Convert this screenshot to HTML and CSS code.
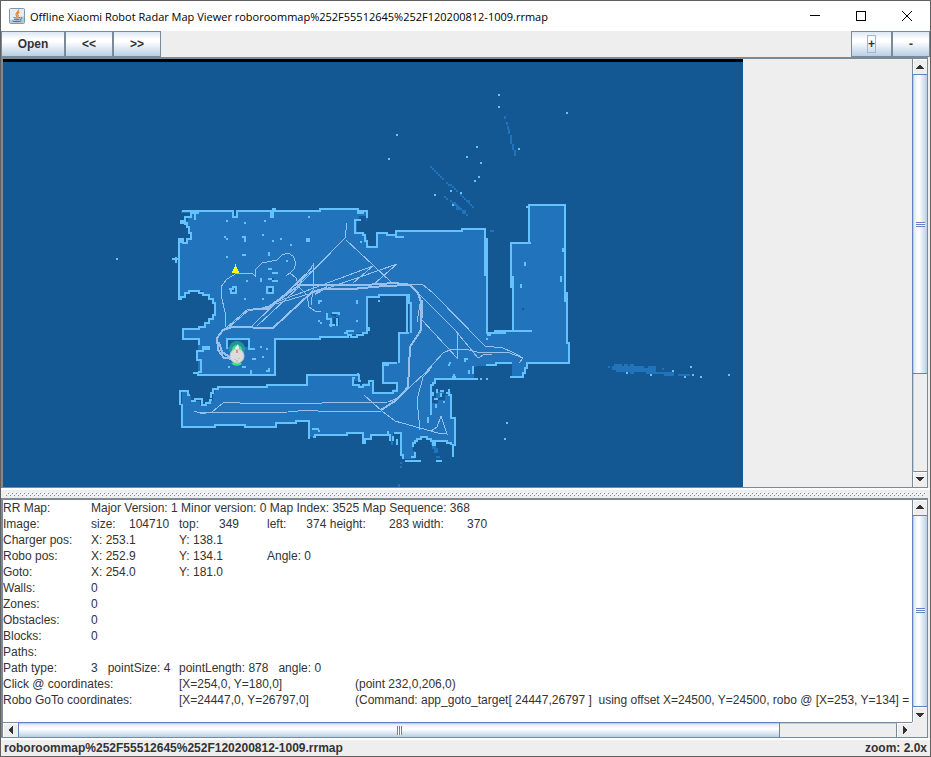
FILE: index.html
```html
<!DOCTYPE html>
<html lang="en">
<head>
    <meta charset="utf-8">
    <title>Offline Xiaomi Robot Radar Map Viewer</title>
    <link rel="stylesheet" href="styles.css">
</head>
<body>
    <div class="window">
        <header class="titlebar">
            <svg class="app-icon" viewBox="0 0 16 16">
                <rect x="0.5" y="0.5" width="15" height="15" rx="1" fill="#e6edf2" stroke="#8298aa"/>
                <path d="M1 15h14v-7c-4 3-9 4-14 4z" fill="#b9cad8"/>
                <path d="M9.5 1.5c1 2-3 3-2.500 5 .2 1 1 1.500 .7 2.500M10.500 4c-2 1-2.500 2-1.500 3 .5.600.3 1.200-.3 1.800" fill="none" stroke="#ee7d22" stroke-width="1.200"/>
                <path d="M4.500 9.500c2 .8 4.500.7 6.500 0M5 11.300c2 .6 4 .5 5.500 0M3.500 13c3 .9 6 .8 9-.1M11.500 9.300c2.200-.3 1.700 1.700-.4 2.200" fill="none" stroke="#46708f"/>
            </svg>
            <h1>Offline Xiaomi Robot Radar Map Viewer roboroommap%252F55512645%252F120200812-1009.rrmap</h1>
            <div class="window-buttons">
                <button aria-label="Minimize"><svg viewBox="0 0 10 10"><path d="M0 4.500h10"/></svg></button>
                <button aria-label="Maximize"><svg viewBox="0 0 10 10"><path d="M.5.5h9v9h-9z"/></svg></button>
                <button aria-label="Close"><svg class="close-icon" viewBox="0 0 10 10"><path d="M0 0l10 10M10 0L0 10"/></svg></button>
            </div>
        </header>

        <nav class="toolbar">
            <button class="open">Open</button>
            <button>&lt;&lt;</button>
            <button>&gt;&gt;</button>
            <span class="spacer"></span>
            <button class="zoom-in"><span class="focus">+</span></button>
            <button class="zoom-out">-</button>
        </nav>

        <main class="split">
            <section class="pane map-pane">
                <div class="map-view">
                    <svg class="map" viewBox="3 59 740 428" shape-rendering="crispEdges">
                        <rect class="outside" x="3" y="59" width="740" height="428"/>
                        <rect x="3" y="59" width="740" height="3"/>

                        <!-- rooms -->
                        <path class="room" d="M181 211H233V217H237V211H271V217H273V211H320V209H358V211H367V221H357V233H365V237H367V245H369V247H377V233H387V235H396V231H462V229H485V238H487V333H496V331H513V288H511V243H529V205H565V292H567V342H569V363H527V367H525V373H523V377H512V363H496V365H486V367H474V379H435V383H431V392H451V418H455V445H451V443H447V441H435V445H431V439H427V437H421V439H417V441H415V443H413V451H415V459H403V457H401V433H393V445H391V435H371V439H365V443H363V433H347V435H315V437H309V421H296V423H276V427H245V425H215V427H182V391H188V395H191V401H200V405H208V401H213V393H215V389H218V387H267V385H307V375H358V381H353V385H363V383H373V393H393V389H397V383H383V363H399V333H409V295H379V297H367V333H357V335H348V337H320V339H275V375H198V339H183V329H199V327H205V323H209V319H213V315H215V303H213V299H209V295H203V291H189V293H185V297H181V299H179V239H183V243H187V239H191V233H189V227H187V223H181V221H185V217H191V213H181Z"/>
                        <path class="room wall-free" d="M443 167M505 116v3M507 122v3M508 126v3M509 129v5M511 135v3M513 144v6M515 150v6M511 136v8M430 167h2M432 169h2M434 171h2M436 173h2M438 175h2M440 177h2M442 179h2M446 183h2M448 185h4M452 187h2M454 189h2M456 191h2M460 195h2M462 197h2M464 199h2M466 201h4M468 203h2M470 205h2M472 207h2M444 197h2M446 199h2M450 201h2M452 203h4M454 205h4M456 207h4M456 209h6M462 211h4M462 213h4M466 215h2"/>
                        <path class="streak" d="M614 364h8v2h2v-2h4v2h2v-2h4v2h10v2h4v-2h8v6h18v4h-10v-2h-18v-2h-12v2h-4v-2h-14v-2h-4v-4h2zM608 366h2v2h-2zM662 368h2v2h-2zM678 374h12v2h-12zM400 462h2v2h-2zM400 466h2v2h-2zM398 484h2v3h-2zM490 230h4v2h-4zM432 444h4v4h2v5h-4v-4h-2zM436 456h4v2h-4z"/>

                        <!-- dark spots inside the rooms -->
                        <path class="outside" d="M228 340h20v7h-20zM181 215h7v6h-5v5h6v12h-7v-9h-2zM358 222h4v6h4v-12h-7zM330 314h6v4h-3v7h6v-8h-4zM271 278h3v2h-3zM522 308h2v2h-2zM232 288h3v3h-3zM269 288h4v5h-4zM432 392h4v6h4v-4h4v-3h4v4h-3v5h-7v3h-6zM474 374h12v-8h-10z"/>

                        <!-- walls -->
                        <path class="wall" d="M182 211H233V217H237V211H271V217H273V209H275V211H320V209H358V211H367V218M358 211V213H363V211M361 220H355V233H363V235H365V241H367V247H377V233H387V235H396V237H404M394 235H396V231H462V229H485V276M487 238V333H506M494 331H532M487 335H491M486 339H488M513 330V276M511 288V243H531M529 243V205H565V302M528 207H526M567 292V344M569 342V363H527V369M525 367V373H523V377H510M512 363H496V365H486M473 366V374M488 379H486M482 379H480M478 379H435V383H433V385H431V415M428 417V423M433 392V396M441 393V397M449 389V395H451V418H455V445H453V457M451 445V443H447V441H435V445H433V441H431V439H427V437H421V439H417V441H415V443H413V447M415 452V457M411 457H416M405 461H421M436 461H442M403 459V455H401V433H394M393 436V441M397 439V445M390 441V435H371V439H365V443H363V433H347V435H315V437H313M309 439V421H296V423H276V427H245V425H215V427H182V404M180 405V391H188V395H190M191 401H195V399H202V405H206V403H210V400H212M211 398V393H213V389H218V387H267V385H307V375H358V373M359 374V381H361M355 378H353V385H359V387H363V385H369V381H373V393H393V391H397V383H383V363H397M385 364V365H389M399 363V333H409M411 333V303H409V295H379V297H367V333H363V335H357V337H351V335H348V337H320V339H275V375H198V373H193M198 372H201V360H197V351H203V347H209V349H205V350M199 345V339H183V329H191M189 329H199V327H205V323H209V319H213V315H215V303H213V299H209V295H203V293H199V291H189V293H185V297H181V299H179V239H183V243H187V239H191V233H189V227H187V223H181V221H185V217H191V213H199M172 259H179M176 263V257M185 216V225M181 238V243M195 214V220M407 295V333M227 349V339H249V349H255M233 347H241"/>

                        <!-- single pixels -->
                        <path class="wall" d="M498 95h2M498 107h2M566 113h2M396 135h2M388 159h2M476 147h2M466 157h2M480 163h2M518 149h2M478 177h2M474 181h2M450 191h2M460 193h2M434 195h2M452 205h2M116 259h2M626 373h2M650 375h2M672 371h2M690 367h2M692 375h2M684 377h2M700 377h2M728 375h2M504 439h2M506 423h2"/>
                        <path class="wall" d="M226 221h2M244 223h2M264 221h2M308 217h2M224 237h2M226 239h2M242 237h4M245 236v6M262 235h2M272 241h2M280 239h2M306 239h4M306 241h4M290 245h2M226 257h2M242 255h4M269 252v4M286 261h2M268 269h4M272 273h6M261 278v4M246 281h2M268 279h4M272 281h6M244 299h2M262 299h2M318 301h4M319 300v4M357 300v4M318 321h2M320 323h2M356 321h2M229 289h4V287h3V293h-5V289M267 287h6V293h-6V286M332 313h7V315M327 313v6h4v8M329 325h6M337 318v8M344 333h4M346 331h8M525 262v4M521 284v4M561 276v6M563 248v4M378 301h2M369 327v4M464 359h4M465 360v2M448 365h2M449 363h2M452 377h4M453 375h2M469 370v4M260 347h2M266 349h2M262 357h2M252 359h4M242 367h4M228 367h2M251 370v4M266 371h4M269 368v4M361 241v2M436 404v4M440 391h4M446 393h3M437 389v4M434 399h4M443 402h2M388 431v4M312 429h7M319 430v2"/>

                        <!-- robot track -->
                        <g class="track">
                            <path d="M225 327V312L221 295V287L227 279L237 273H252L255 276V270L262 263L277 260L282 255L288 253L293 256L296 263L294 269L290 273L286 276M290 273L296 278L299 287L307 295L309 307L315 311H321"/>
                            <path d="M226 328L248 309H268L297 287L313 265V290L311 305M229 327L249 310M252 326L287 292L312 268M257 326L300 286M313 270L272 305L259 309"/>
                            <path d="M347 223L345 238L300 284M346 240L373 265L392 283M397 264L360 277L322 290L272 305M373 266L322 285L279 301M397 264L373 285M373 266L353 283"/>
                            <path d="M410 284H422L433 293L485 346L503 348L514 353L523 358L519 363M417 292L455 330L478 358L485 354L492 355M422 320L457 358V334M421 298L417 322M422 300V318"/>
                            <path d="M200 414L212 412L223 403L228 402L240 403H308L317 404L322 403L388 402L398 398L425 373L443 353L452 349H465L477 352H507L523 358M364 395L382 411L395 421L420 428L438 433L447 434L441 416L437 427L431 431M420 430L417 400L423 377L432 367M381 411H318L308 410L288 412L200 413L194 411"/>
                        </g>
                        <path class="track trunk" d="M233 359L224 358L218 350L217 338L223 330L232 327L273 328L312 292L323 289H352L385 286L410 285L418 293L421 302V330L410 347L408 387L403 393L395 401L381 410"/>
                        <path class="track trunk" d="M297 285H365L395 283L412 285M249 310L267 308L298 286M231 358L222 352L219 342M315 294L327 287"/>

                        <!-- goto marker, charger and robot -->
                        <path d="M235 264h1v3h1v2h1v2h1v2h-7v-2h1v-2h1v-2h1z" fill="#ff0"/>
                        <g shape-rendering="auto">
                            <circle cx="237" cy="349" r="8" fill="#2dab9b" opacity=".7"/>
                            <circle cx="237" cy="350" r="5" fill="#3ee18a"/>
                            <path d="M238 344l1 5-5 1z" fill="#fff"/>
                            <path d="M231 363a8 8 0 0 0 11 1l-3-3z" fill="#3ee18a"/>
                            <circle cx="237" cy="356" r="7" fill="#dcdcdc" stroke="#c8ccd0"/>
                            <path d="M237 350v3" stroke="#d44"/>
                            <path d="M235 359v1M239 358v1M236 361h2" stroke="#aaa"/>
                        </g>
                    </svg>
                </div>
                <div class="scrollbar vertical">
                    <button aria-label="Scroll map up"><svg viewBox="0 0 8 4"><path d="M3 0h2v1h1v1h1v1h1v1H0V3h1V2h1V1h1z"/></svg></button>
                    <div class="thumb map-thumb"><i class="grip"></i></div>
                    <div class="track-rest map-rest"></div>
                    <button aria-label="Scroll map down"><svg viewBox="0 0 8 4"><path d="M0 0h8v1H7v1H6v1H5v1H3V3H2V2H1V1H0z"/></svg></button>
                </div>
            </section>

            <div class="divider">
                <svg width="100%" height="4">
                    <defs>
                        <pattern id="bumps" width="4" height="4" patternUnits="userSpaceOnUse">
                            <path d="M2 0h1v1H2zM0 2h1v1H0z" fill="#fff"/>
                            <path d="M3 1h1v1H3zM1 3h1v1H1z" fill="#7a8a99"/>
                        </pattern>
                    </defs>
                    <rect width="100%" height="4" fill="url(#bumps)"/>
                </svg>
            </div>

            <section class="pane log-pane">
                <textarea class="log" aria-label="Map details" wrap="off" readonly>RR Map:	Major Version: 1 Minor version: 0 Map Index: 3525 Map Sequence: 368
Image:	size:    104710	top:      349	left:      374 height:       283 width:       370
Charger pos:	X: 253.1	Y: 138.1
Robo pos:	X: 252.9	Y: 134.1	Angle: 0
Goto:	X: 254.0	Y: 181.0
Walls:	0
Zones:	0
Obstacles:	0
Blocks:	0
Paths:
Path type:	3   pointSize: 4	pointLength: 878   angle: 0
Click @ coordinates:	[X=254,0, Y=180,0]	(point 232,0,206,0)
Robo GoTo coordinates:	[X=24447,0, Y=26797,0]	(Command: app_goto_target[ 24447,26797 ]  using offset X=24500, Y=24500, robo @ [X=253, Y=134] =</textarea>
                <div class="scrollbar vertical">
                    <button aria-label="Scroll text up"><svg viewBox="0 0 8 4"><path d="M3 0h2v1h1v1h1v1h1v1H0V3h1V2h1V1h1z"/></svg></button>
                    <div class="thumb"><i class="grip"></i></div>
                    <button aria-label="Scroll text down"><svg viewBox="0 0 8 4"><path d="M0 0h8v1H7v1H6v1H5v1H3V3H2V2H1V1H0z"/></svg></button>
                </div>
                <div class="scrollbar horizontal">
                    <button aria-label="Scroll text left"><svg viewBox="0 0 4 8"><path d="M4 0v8H3V7H2V6H1V5H0V3h1V2h1V1h1V0z"/></svg></button>
                    <div class="thumb log-thumb"><i class="grip"></i></div>
                    <div class="track-rest log-rest"></div>
                    <button aria-label="Scroll text right"><svg viewBox="0 0 4 8"><path d="M0 0v8h1V7h1V6h1V5h1V3H3V2H2V1H1V0z"/></svg></button>
                </div>
                <div class="corner"></div>
            </section>
        </main>

        <footer class="statusbar">
            <span>roboroommap%252F55512645%252F120200812-1009.rrmap</span>
            <span>zoom: 2.0x</span>
        </footer>
    </div>
</body>
</html>
```
FILE: styles.css
```css
* {
    box-sizing: border-box;
}

body {
    margin: 0;
    font-family: "Liberation Sans", Arial, sans-serif;
    font-size: 12px;
    color: #333;
}

button {
    margin: 0;
    padding: 0;
    border: none;
    font: inherit;
    color: inherit;
}

.window {
    display: flex;
    flex-direction: column;
    height: 100vh;
    background: #eee;
    border: 1px solid #606060;
}

/* Title bar */
.titlebar {
    display: flex;
    align-items: center;
    flex: none;
    height: 30px;
    padding-left: 8px;
    background: #fff;
    color: #000;
}

.app-icon {
    width: 16px;
    height: 16px;
    margin-right: 5px;
}

h1 {
    flex: 1;
    margin: 0;
    font-family: "Open Sans", sans-serif;
    font-size: 11px;
    font-weight: 400;
    white-space: nowrap;
}

.window-buttons {
    display: flex;
}

.window-buttons button {
    display: flex;
    align-items: center;
    justify-content: center;
    width: 46px;
    height: 30px;
    background: #fff;
}

.window-buttons svg {
    width: 10px;
    height: 10px;
    fill: none;
    stroke: #000;
    shape-rendering: crispEdges;
}

.window-buttons .close-icon {
    shape-rendering: auto;
}

/* Toolbar */
.toolbar {
    display: flex;
    flex: none;
    height: 26px;
}

.toolbar button {
    width: 48px;
    border: 1px solid #7a8a99;
    background: linear-gradient(#dde8f3, #fff 30%, #fff 40%, #b8cfe5);
    font-weight: bold;
}

.toolbar .open {
    width: 64px;
}

.spacer {
    flex: 1;
}

.toolbar .zoom-in {
    width: 41px;
}

.toolbar .zoom-out {
    width: 38px;
}

.focus {
    display: inline-block;
    border: 1px solid #a3b8cc;
    line-height: 16px;
}

/* Split pane */
.split {
    display: flex;
    flex: 1;
    flex-direction: column;
    min-height: 0;
}

.pane {
    display: grid;
    grid-template-columns: minmax(0, 1fr) 16px;
    min-height: 0;
    margin-right: 2px;
    border: solid #7a8a99;
    border-width: 2px 0 1px 2px;
}

.map-pane {
    flex: 431 1 0;
}

.log-pane {
    flex: 240 1 0;
    grid-template-rows: minmax(0, 1fr) 16px;
    border-bottom: none;
}

.map-view {
    overflow: hidden;
}

.map {
    display: block;
    width: 740px;
    height: 428px;
}

.outside {
    fill: #145893;
}

.room,
.streak {
    fill: #2173bb;
}

.wall-free {
    fill: none;
    stroke: #2173bb;
    stroke-width: 2px;
}

.wall {
    fill: none;
    stroke: #64c3ff;
    stroke-width: 2px;
    stroke-linecap: butt;
}

.track {
    fill: none;
    stroke: #98c0ed;
    stroke-width: 1px;
}

.trunk {
    stroke-width: 2px;
}

.divider {
    flex: none;
    height: 10px;
    padding: 4px 4px 2px;
    background: linear-gradient(#fff 2px, #eee 2px);
}

.divider svg {
    display: block;
}

.log {
    width: 100%;
    height: 100%;
    padding: 0;
    border: none;
    outline: none;
    resize: none;
    overflow: hidden;
    background: #fff;
    font: inherit;
    line-height: 16px;
    color: #333;
    tab-size: 88px;
}

/* Scroll bars */
.scrollbar {
    display: flex;
    min-width: 0;
    min-height: 0;
    border: 1px solid #7a8a99;
}

.vertical {
    flex-direction: column;
    border-width: 0 1px;
}

.horizontal {
    border-width: 1px 0;
}

.scrollbar button {
    display: flex;
    align-items: center;
    justify-content: center;
    flex: none;
    width: 15px;
    height: 15px;
    background: #eee;
    box-shadow: inset 1px 1px #fff;
}

.vertical button {
    width: 14px;
}

.horizontal button {
    height: 14px;
}

.scrollbar button svg {
    width: 8px;
    height: 4px;
    fill: #333;
    shape-rendering: crispEdges;
}

.horizontal button svg {
    width: 4px;
    height: 8px;
}

.thumb {
    display: flex;
    flex: 1;
    align-items: center;
    justify-content: center;
    border: 1px solid #6382bf;
}

.vertical .thumb {
    margin-left: -1px;
    border-right: none;
    background: linear-gradient(90deg, #b8cfe5 1px, #dde8f3 1px, #fff 5px, #fff 6px, #b8cfe5);
}

.horizontal .thumb {
    margin-top: -1px;
    border-bottom: none;
    background: linear-gradient(#b8cfe5 1px, #dde8f3 1px, #fff 5px, #fff 6px, #b8cfe5);
}

.grip {
    width: 9px;
    height: 5px;
    background: repeating-linear-gradient(#6382bf 0 1px, #fff 1px 2px);
}

.horizontal .grip {
    width: 5px;
    height: 9px;
    background: repeating-linear-gradient(90deg, #6382bf 0 1px, #fff 1px 2px);
}

.track-rest {
    background: #eee;
}

.vertical .track-rest {
    border-left: 1px solid #b8cfe5;
    border-bottom: 1px solid #7a8a99;
}

.horizontal .track-rest {
    border-top: 1px solid #b8cfe5;
    border-right: 1px solid #7a8a99;
}

.map-thumb {
    flex: 300 1 0;
}

.map-rest {
    flex: 97 1 0;
}

.log-thumb {
    flex: 762 1 0;
}

.log-rest {
    flex: 116 1 0;
}

.corner {
    border: solid #7a8a99;
    border-width: 0 1px 1px 0;
}

/* Status bar */
.statusbar {
    display: flex;
    flex: none;
    justify-content: space-between;
    height: 18px;
    padding: 2px 3px 0;
    background: linear-gradient(#fff 2px, #eee 2px);
    font-weight: bold;
    line-height: 16px;
}
```
